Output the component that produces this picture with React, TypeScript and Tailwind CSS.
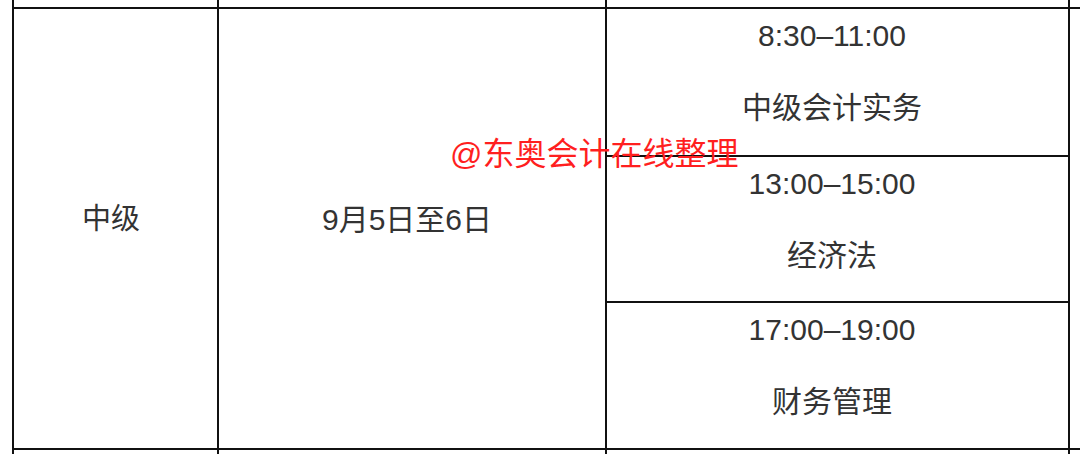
import React from "react";

const sessions = [
  { time: "8:30–11:00", subject: "中级会计实务", h: "h-[148px] border-b-2" },
  { time: "13:00–15:00", subject: "经济法", h: "h-[146px] border-b-2" },
  { time: "17:00–19:00", subject: "财务管理", h: "flex-1" },
];

export default function App() {
  return (
    <div
      className="relative w-[1080px] h-[454px] overflow-hidden bg-white text-[#333] pl-[12px]"
      style={{ fontFamily: '"Liberation Sans", "Noto Sans CJK SC", sans-serif' }}
    >
      {/* previous row tail */}
      <div className="grid grid-cols-[205px_388px_465px] h-[7px]">
        <div className="border-l-2 border-[#111]" />
        <div className="border-l-2 border-[#111]" />
        <div className="border-l-2 border-r-2 border-[#111]" />
      </div>

      {/* main row */}
      <div className="grid grid-cols-[205px_388px_465px] h-[443px] border-y-2 border-[#111]">
        <div className="border-l-2 border-[#111] flex items-center justify-center pr-[9px] pb-[18px] text-[29px]">
          中级
        </div>
        <div className="border-l-2 border-[#111] flex items-center justify-center pr-[10px] pb-[18px] text-[30px]">
          9月5日至6日
        </div>
        <div className="border-l-2 border-r-2 border-[#111] flex flex-col">
          {sessions.map((s) => (
            <div
              key={s.time}
              className={`${s.h} border-[#111] flex flex-col items-center pr-[11px] pt-[7px] gap-[32px] text-[30px] leading-[40px]`}
            >
              <div>{s.time}</div>
              <div>{s.subject}</div>
            </div>
          ))}
        </div>
      </div>

      {/* next row head */}
      <div className="grid grid-cols-[205px_388px_465px] h-[10px]">
        <div className="border-l-2 border-[#111]" />
        <div className="border-l-2 border-[#111]" />
        <div className="border-l-2 border-r-2 border-[#111]" />
      </div>

      {/* watermark */}
      <div className="absolute left-[450px] top-[138px] text-[32px] leading-[32px] text-[#ff1f1f] whitespace-nowrap">
        @东奥会计在线整理
      </div>
    </div>
  );
}
